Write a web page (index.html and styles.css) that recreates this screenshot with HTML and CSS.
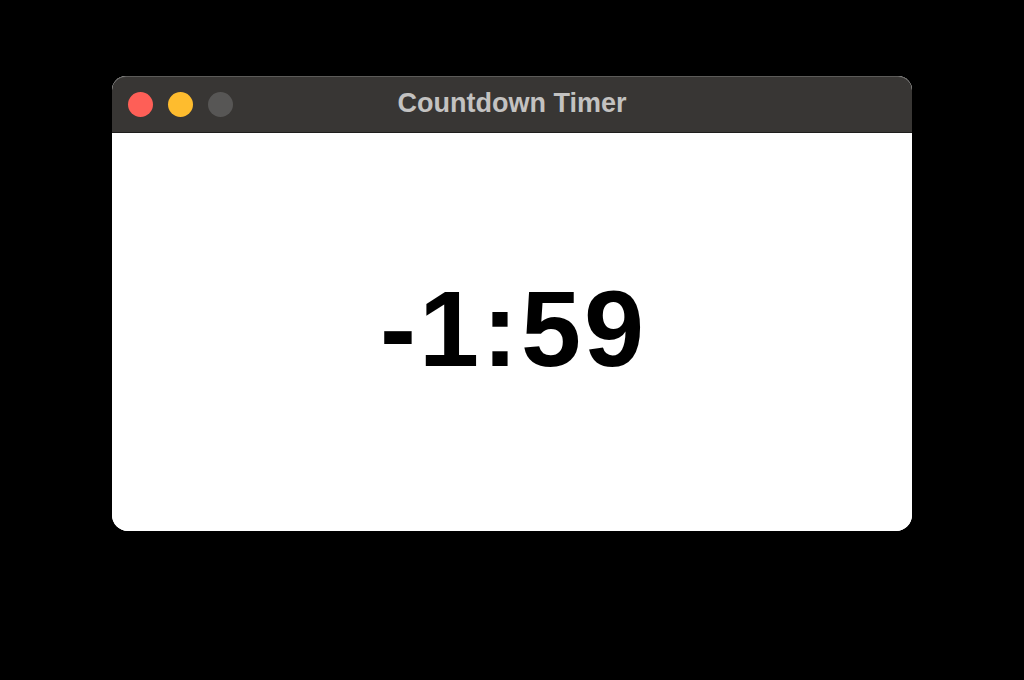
FILE: index.html
```html
<!DOCTYPE html>
<html>
<head>
<meta charset="utf-8">
<link rel="stylesheet" href="styles.css">
</head>
<body>
<div class="screen">
  <div class="window">
    <div class="titlebar">
      <div class="lights">
        <span class="light red"></span>
        <span class="light yellow"></span>
        <span class="light gray"></span>
      </div>
      <div class="title">Countdown Timer</div>
    </div>
    <div class="content">
      <div class="timer">-1:59</div>
    </div>
  </div>
</div>
</body>
</html>
```
FILE: styles.css
```css
html, body {
  margin: 0;
  padding: 0;
  background: #000;
}
.screen {
  width: 1024px;
  height: 680px;
  padding-top: 76px;
  padding-left: 112px;
  box-sizing: border-box;
}
.window {
  width: 800px;
  height: 455px;
  border-radius: 14px 14px 16px 16px;
  overflow: hidden;
  display: flex;
  flex-direction: column;
  background: #fff;
}
.titlebar {
  flex: none;
  height: 57px;
  box-sizing: border-box;
  background: #383634;
  border-top: 1px solid #5c5b59;
  border-bottom: 1px solid #1e1d1c;
  border-radius: 14px 14px 0 0;
  display: flex;
  align-items: center;
  position: relative;
}
.lights {
  display: flex;
  gap: 15px;
  padding-left: 16px;
  margin-top: -1px;
}
.light {
  width: 25px;
  height: 25px;
  border-radius: 50%;
  display: block;
}
.red { background: #fe5f57; }
.yellow { background: #febc2e; }
.gray { background: #575655; }
.title {
  position: absolute;
  left: 0;
  right: 0;
  top: 0;
  bottom: 0;
  display: flex;
  align-items: center;
  justify-content: center;
  font-family: "Liberation Sans", Arial, sans-serif;
  font-weight: bold;
  font-size: 27px;
  color: #c3c2c1;
  margin-top: -2px;
}
.content {
  flex: 1;
  display: flex;
  align-items: center;
  justify-content: center;
  background: #fff;
}
.timer {
  font-family: "Liberation Sans", Arial, sans-serif;
  font-weight: bold;
  font-size: 108px;
  letter-spacing: 3px;
  color: #000;
  line-height: 1;
  margin-top: -6px;
  margin-left: 3px;
}
```
